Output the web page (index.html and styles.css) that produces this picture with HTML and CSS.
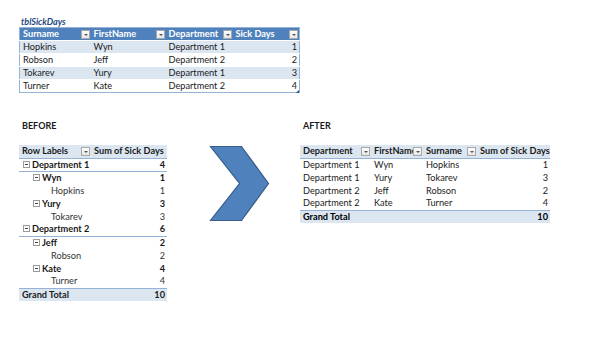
FILE: index.html
```html
<!DOCTYPE html>
<html>
<head>
<meta charset="utf-8">
<link rel="stylesheet" href="styles.css">
</head>
<body>
<div class="page">
  <section class="source">
    <div class="caption">tblSickDays</div>
    <div class="tablewrap">
      <table class="xl">
        <colgroup><col class="c1"><col class="c2"><col class="c3"><col class="c4"></colgroup>
        <thead>
          <tr>
            <th><span class="hd">Surname</span><span class="dd"></span></th>
            <th><span class="hd">FirstName</span><span class="dd"></span></th>
            <th><span class="hd">Department</span><span class="dd"></span></th>
            <th><span class="hd">Sick Days</span><span class="dd"></span></th>
          </tr>
        </thead>
        <tbody>
          <tr class="band"><td>Hopkins</td><td>Wyn</td><td>Department 1</td><td class="num">1</td></tr>
          <tr><td>Robson</td><td>Jeff</td><td>Department 2</td><td class="num">2</td></tr>
          <tr class="band"><td>Tokarev</td><td>Yury</td><td>Department 1</td><td class="num">3</td></tr>
          <tr><td>Turner</td><td>Kate</td><td>Department 2</td><td class="num">4</td></tr>
        </tbody>
      </table>
      <span class="resize"></span>
    </div>
  </section>

  <section class="compare">
    <div class="block before">
      <div class="label">BEFORE</div>
      <table class="pivot tree">
        <colgroup><col class="p1"><col class="p2"></colgroup>
        <thead>
          <tr><th><span class="hd">Row Labels</span><span class="dd"></span></th><th class="sum">Sum of Sick Days</th></tr>
        </thead>
        <tbody>
          <tr class="l1"><td><span class="tg"></span>Department 1</td><td class="num">4</td></tr>
          <tr class="l2"><td><span class="tg"></span>Wyn</td><td class="num">1</td></tr>
          <tr class="l3"><td>Hopkins</td><td class="num">1</td></tr>
          <tr class="l2"><td><span class="tg"></span>Yury</td><td class="num">3</td></tr>
          <tr class="l3"><td>Tokarev</td><td class="num">3</td></tr>
          <tr class="l1"><td><span class="tg"></span>Department 2</td><td class="num">6</td></tr>
          <tr class="l2"><td><span class="tg"></span>Jeff</td><td class="num">2</td></tr>
          <tr class="l3"><td>Robson</td><td class="num">2</td></tr>
          <tr class="l2"><td><span class="tg"></span>Kate</td><td class="num">4</td></tr>
          <tr class="l3"><td>Turner</td><td class="num">4</td></tr>
          <tr class="total"><td>Grand Total</td><td class="num">10</td></tr>
        </tbody>
      </table>
    </div>

    <svg class="arrow" width="62" height="78" viewBox="0 0 62 78">
      <polygon points="1.5,1.5 32.5,1.5 59.5,38.5 32.5,75.5 1.5,75.5 30.5,38.5" fill="#4F81BD" stroke="#385D8A" stroke-width="1.2" stroke-linejoin="miter"/>
    </svg>

    <div class="block after">
      <div class="label">AFTER</div>
      <table class="pivot flat">
        <colgroup><col class="a1"><col class="a2"><col class="a3"><col class="a4"></colgroup>
        <thead>
          <tr>
            <th><span class="hd">Department</span><span class="dd"></span></th>
            <th><span class="hd">FirstName</span><span class="dd"></span></th>
            <th><span class="hd">Surname</span><span class="dd"></span></th>
            <th class="sum">Sum of Sick Days</th>
          </tr>
        </thead>
        <tbody>
          <tr><td>Department 1</td><td>Wyn</td><td>Hopkins</td><td class="num">1</td></tr>
          <tr><td>Department 1</td><td>Yury</td><td>Tokarev</td><td class="num">3</td></tr>
          <tr><td>Department 2</td><td>Jeff</td><td>Robson</td><td class="num">2</td></tr>
          <tr><td>Department 2</td><td>Kate</td><td>Turner</td><td class="num">4</td></tr>
          <tr class="total"><td>Grand Total</td><td></td><td></td><td class="num">10</td></tr>
        </tbody>
      </table>
    </div>
  </section>
</div>
</body>
</html>
```

FILE: styles.css
```css
* { box-sizing: border-box; }
html, body { margin: 0; padding: 0; background: #fff; }
body {
  width: 600px;
  height: 349px;
  overflow: hidden;
  font-family: Lato, "Liberation Sans", sans-serif;
  font-size: 9.2px;
  color: #1a1a1a;
}
.page {
  padding: 16px 0 0 19px;
  display: flex;
  flex-direction: column;
}
.caption {
  font-style: italic;
  font-weight: bold;
  color: #1F497D;
  font-size: 9px;
  line-height: 11px;
  padding-left: 2px;
}
.tablewrap { position: relative; width: 280px; }
table { border-collapse: collapse; table-layout: fixed; }
td, th {
  height: 13px;
  line-height: 12px;
  padding: 0 2px 0 3px;
  white-space: nowrap;
  overflow: hidden;
  text-align: left;
  vertical-align: middle;
}
th { position: relative; font-weight: bold; }
.num { text-align: right; padding-right: 2px; }

.xl { width: 280px; border: 1px solid #95B3D7; }
.xl .c1 { width: 71px; } .xl .c2 { width: 75px; } .xl .c3 { width: 67px; } .xl .c4 { width: 67px; }
.xl thead th { background: #4F81BD; color: #fff; }
.xl tbody tr { background: #fff; }
.xl tbody tr.band { background: #DCE6F1; }
.xl tbody td { border-top: 1px solid #fff; }

.dd {
  position: absolute;
  right: 1px;
  top: 2px;
  width: 9px;
  height: 9px;
  background: linear-gradient(#fdfdfd, #e6e6e6);
  border: 1px solid #a8a8a8;
}
.dd::after {
  content: "";
  position: absolute;
  left: 2px;
  top: 3px;
  border-left: 2px solid transparent;
  border-right: 2px solid transparent;
  border-top: 2px solid #555;
}
.resize {
  position: absolute;
  right: 0;
  bottom: 0;
  width: 0; height: 0;
  border-left: 3px solid transparent;
  border-bottom: 3px solid #1F497D;
}

.compare {
  display: flex;
  align-items: flex-start;
  margin-top: 27px;
}
.label {
  font-weight: bold;
  font-size: 9px;
  line-height: 11px;
  padding-left: 3px;
  margin-bottom: 14px;
}
.pivot thead th { background: #DCE6F1; border-bottom: 1px solid #95B3D7; }
.tree { width: 148px; }
.pivot .p1 { width: 72px; } .pivot .p2 { width: 76px; }
.pivot .total td { background: #DCE6F1; border-top: 1px solid #95B3D7; font-weight: bold; }
.pivot .l1 td { font-weight: bold; border-bottom: 1px solid #95B3D7; }
.pivot .l2 td { font-weight: bold; }
.pivot .l1 td:first-child { padding-left: 4px; }
.pivot .l2 td:first-child { padding-left: 14px; }
.pivot .l3 td:first-child { padding-left: 32px; }
.pivot .l3 td { color: #333; }
.tg {
  display: inline-block;
  position: relative;
  width: 7px;
  height: 7px;
  border: 1px solid #9a9a9a;
  background: #fff;
  margin-right: 2px;
  vertical-align: 0;
}
.tg::after {
  content: "";
  position: absolute;
  left: 1px; right: 1px; top: 2px;
  height: 1px;
  background: #444;
}
.arrow { margin: 25px 0 0 42px; flex: none; }
.after { margin-left: 29px; }
.flat { width: 250px; }
.flat .a1 { width: 71px; } .flat .a2 { width: 52px; } .flat .a3 { width: 54px; } .flat .a4 { width: 73px; }
.flat tbody td { color: #222; }
.flat .total td { color: #000; }
```
